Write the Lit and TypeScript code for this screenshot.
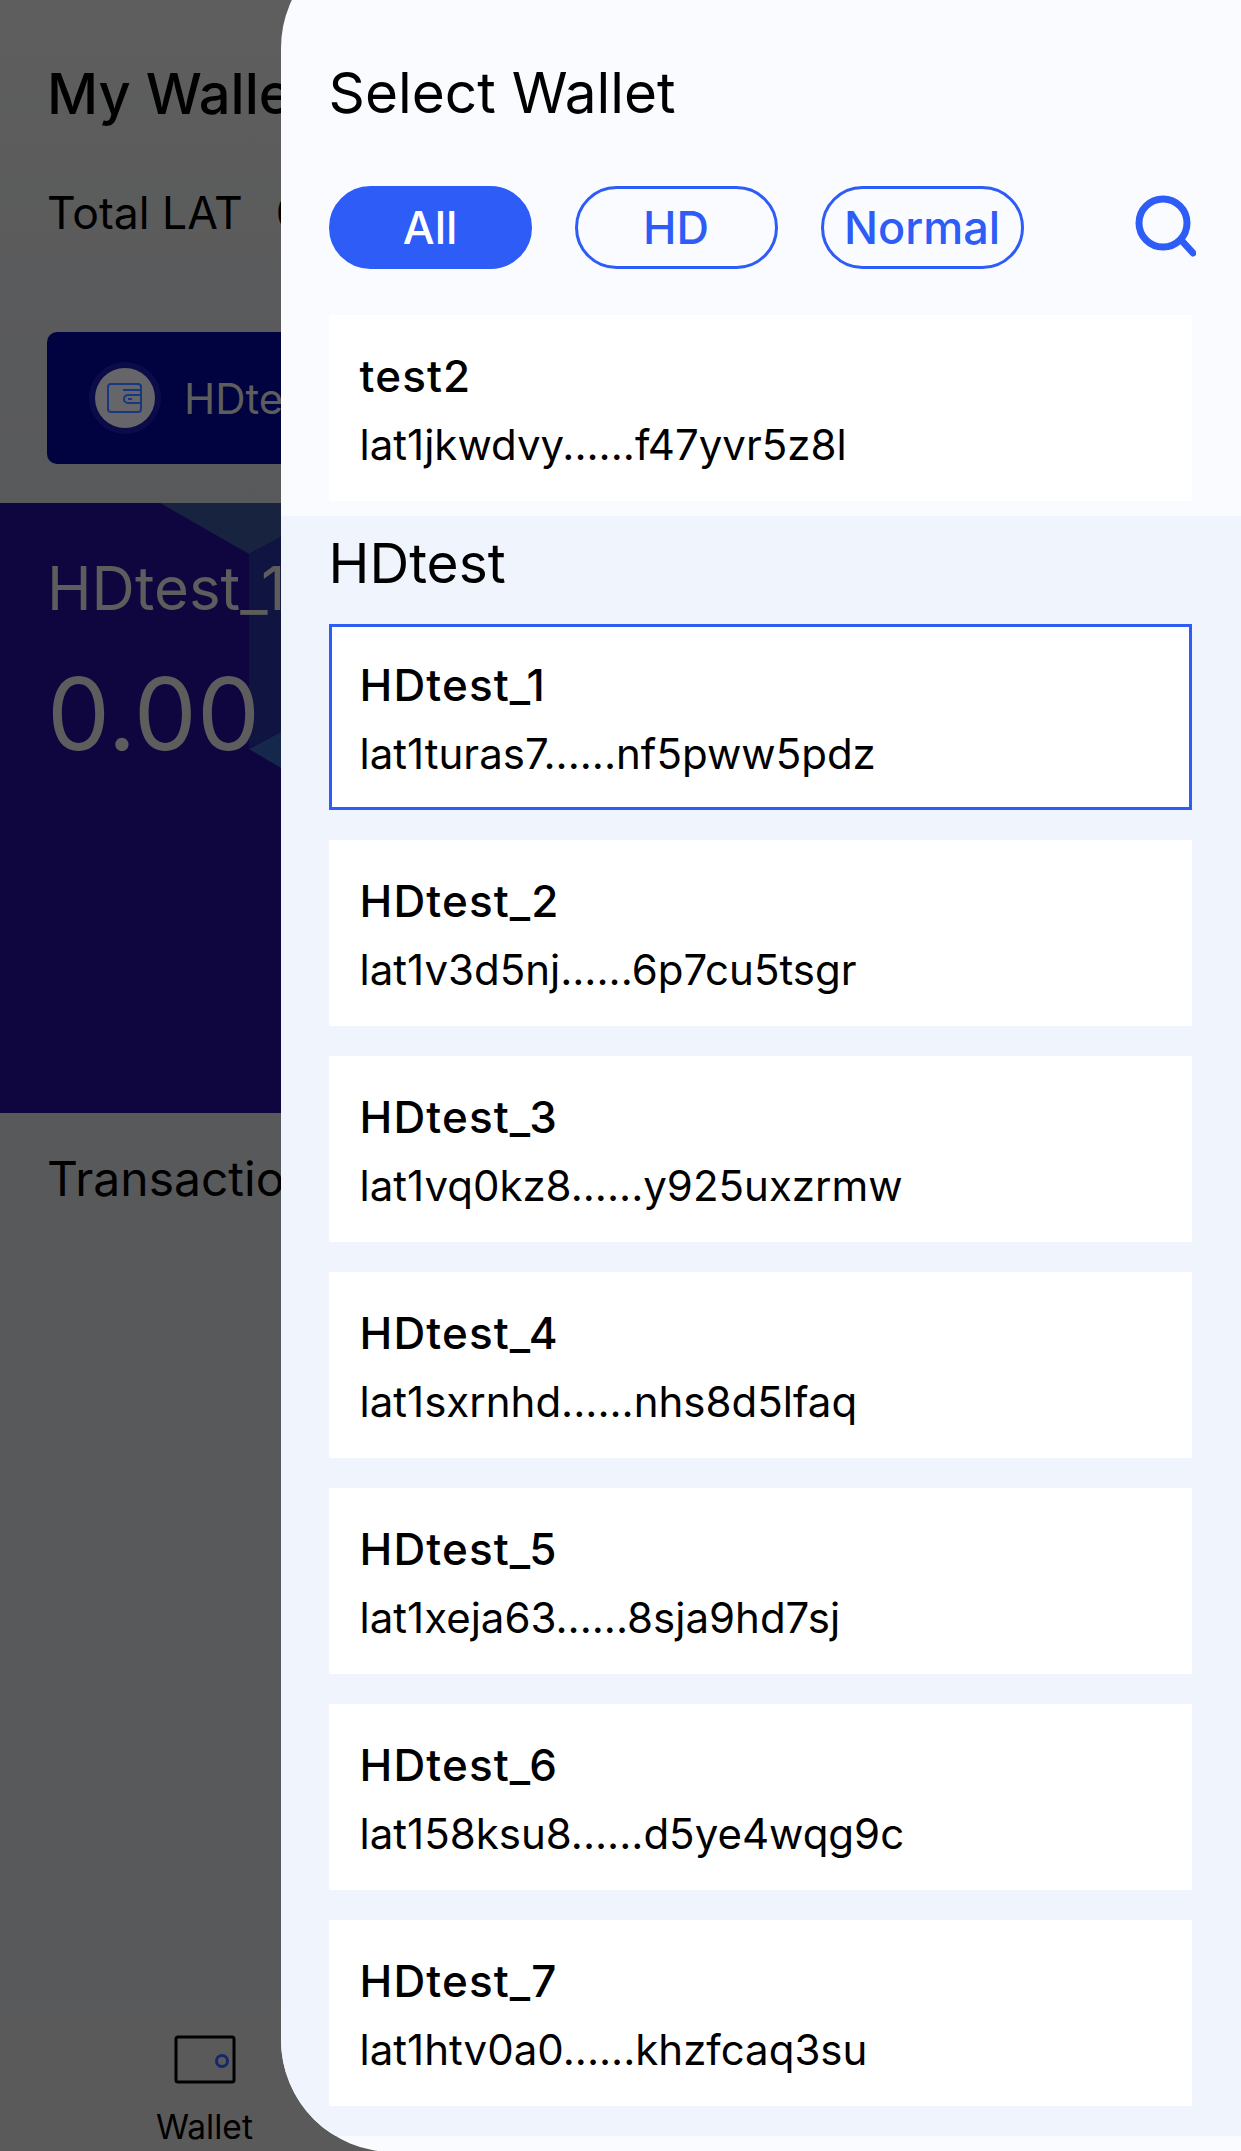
import { LitElement, html, css, svg } from "lit";
import { customElement } from "lit/decorators.js";

const hd = [
  ["HDtest_1", "lat1turas7......nf5pww5pdz"],
  ["HDtest_2", "lat1v3d5nj......6p7cu5tsgr"],
  ["HDtest_3", "lat1vq0kz8......y925uxzrmw"],
  ["HDtest_4", "lat1sxrnhd......nhs8d5lfaq"],
  ["HDtest_5", "lat1xeja63......8sja9hd7sj"],
  ["HDtest_6", "lat158ksu8......d5ye4wqg9c"],
  ["HDtest_7", "lat1htv0a0......khzfcaq3su"],
];

@customElement("app-root")
export class AppRoot extends LitElement {
  static styles = css`
    :host {
      display: block;
      position: relative;
      width: 1241px;
      height: 2151px;
      overflow: hidden;
      font-family: Inter, "Liberation Sans", sans-serif;
      color: #000;
    }
    * { box-sizing: border-box; }
    .page {
      height: 2151px;
      display: flex;
      flex-direction: column;
      background: linear-gradient(#5e5e5e, #58595b 500px);
      overflow: hidden;
    }
    .my { margin: 60px 0 0 47px; font-size: 56px; line-height: 68px; font-weight: 500; white-space: nowrap; }
    .total { margin: 58px 0 0 47px; font-size: 44.5px; line-height: 54px; display: flex; gap: 33px; white-space: nowrap; }
    .wchip {
      margin: 92px 0 0 47px;
      width: 1147px;
      height: 132px;
      flex: none;
      background: #000340;
      border-radius: 10px;
      display: flex;
      align-items: center;
      gap: 29px;
      padding-left: 48px;
      color: #5d5d5d;
      font-size: 42px;
    }
    .halo {
      width: 60px; height: 60px; border-radius: 50%;
      background: #66666a;
      box-shadow: 0 0 0 6px #0b0b4a;
      display: flex; align-items: center; justify-content: center;
      flex: none;
    }
    .band {
      position: relative;
      margin-top: 39px;
      height: 610px;
      flex: none;
      background: #0f0640;
      color: #5d5d5d;
      overflow: hidden;
    }
    .hex { position: absolute; left: 0; top: 0; }
    .bname { position: relative; margin: 51px 0 0 47px; font-size: 60px; line-height: 68px; white-space: nowrap; }
    .bval { position: relative; margin: 32px 0 0 47px; font-size: 100px; line-height: 120px; }
    .tx { margin: 37px 0 0 47px; font-size: 48px; line-height: 58px; white-space: nowrap; }
    .spacer { flex: 1; }
    .nav {
      height: 144px;
      flex: none;
      background: #5a5a5a;
      padding: 28px 0 0 153px;
      display: flex;
      flex-direction: column;
      align-items: flex-start;
      width: 100%;
    }
    .nav .lbl { font-size: 33.5px; line-height: 36px; margin: 25px 0 0 3px; color: #000; }
    .navicon { display: block; margin-left: 21px; }

    .panel {
      position: absolute;
      left: 280.6px;
      top: -64px;
      width: 960.4px;
      height: 2216px;
      background: #fafbff;
      border-radius: 112px 0 0 112px;
      overflow: hidden;
      display: flex;
      flex-direction: column;
    }
    .head { padding: 123px 0 0 48px; height: 250px; flex: none; }
    .title { font-size: 56.7px; line-height: 68px; }
    .filters { display: flex; align-items: center; margin-top: 59px; gap: 43px; position: relative; }
    .f {
      width: 203px; height: 83px; border-radius: 42px;
      border: 3px solid #2d5cf6; color: #2d5cf6;
      display: flex; align-items: center; justify-content: center;
      font-size: 45px; font-weight: 500;
    }
    .f.on { background: #2d5cf6; color: #fff; }
    .search { position: absolute; left: 803px; top: 8px; }
    .top { padding: 129px 49px 15px 48px; flex: none; }
    .card {
      height: 186px;
      background: #fff;
      padding: 35px 0 0 31px;
    }
    .card.sel { border: 3px solid #2d5cf6; padding: 32px 0 0 28px; }
    .n { font-size: 44px; line-height: 52px; font-weight: 450; letter-spacing: 1.1px; }
    .a { font-size: 42px; line-height: 48px; margin-top: 18.5px; white-space: nowrap; }
    .list {
      flex: 1;
      background: #f0f4fc;
      padding: 0 49px 30px 48px;
      display: flex;
      flex-direction: column;
      gap: 30px;
    }
    .gname { font-size: 55px; line-height: 64px; margin-top: 15px; height: 63px; }
    .foot { height: 16px; flex: none; }
  `;

  card(n: string, a: string, sel = false) {
    return html`<div class="card ${sel ? "sel" : ""}"><div class="n">${n}</div><div class="a">${a}</div></div>`;
  }

  render() {
    return html`
      <div class="page">
        <div class="my">My Wallet</div>
        <div class="total"><span>Total LAT</span><span>0.00</span></div>
        <div class="wchip">
          <div class="halo">
            <svg width="36" height="30" viewBox="0 0 36 30" fill="none" stroke="#17387f" stroke-width="2">
              <rect x="1" y="1" width="33" height="28" rx="3"/>
              <path d="M16 7H34"/>
              <path d="M34 12H21a4 4 0 0 0 0 8h13"/>
              <path d="M21 16h4"/>
            </svg>
          </div>
          <span>HDtest_1</span>
        </div>
        <div class="band">
          <svg class="hex" width="1241" height="610" viewBox="0 0 1241 610">
            ${svg`<path d="M160 0H281V34L249 51Z" fill="#17233f"/>
            <path d="M249 51L281 34V229L249 245Z" fill="#0f1440"/>
            <path d="M249 246L281 229V265Z" fill="#15274a"/>`}
          </svg>
          <div class="bname">HDtest_1</div>
          <div class="bval">0.00</div>
        </div>
        <div class="tx">Transactions</div>
        <div class="spacer"></div>
        <div class="nav">
          <svg class="navicon" width="62" height="49" viewBox="0 0 62 49" fill="none">
            <rect x="2" y="2" width="58" height="45" rx="2" stroke="#000" stroke-width="3"/>
            <circle cx="48" cy="26" r="5.5" stroke="#15276b" stroke-width="3"/>
          </svg>
          <div class="lbl">Wallet</div>
        </div>
      </div>
      <div class="panel">
        <div class="head">
          <div class="title">Select Wallet</div>
          <div class="filters">
            <div class="f on">All</div>
            <div class="f">HD</div>
            <div class="f">Normal</div>
            <svg class="search" width="64" height="64" viewBox="0 0 64 64" fill="none" stroke="#2d5cf6" stroke-width="7" stroke-linecap="round">
              <circle cx="31" cy="29" r="24"/>
              <path d="M50 47L61 59"/>
            </svg>
          </div>
        </div>
        <div class="top">${this.card("test2", "lat1jkwdvy......f47yvr5z8l")}</div>
        <div class="list">
          <div class="gname">HDtest</div>
          ${hd.map(([n, a], i) => this.card(n, a, i === 0))}
        </div>
        <div class="foot"></div>
      </div>
    `;
  }
}
